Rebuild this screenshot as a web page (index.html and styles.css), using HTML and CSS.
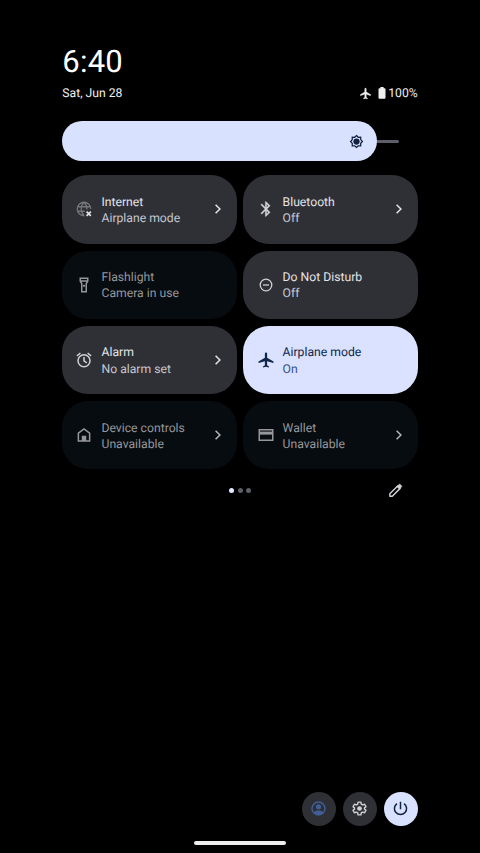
FILE: index.html
```html
<!DOCTYPE html>
<html lang="en">
<head>
<meta charset="utf-8">
<title>Quick settings</title>
<link rel="stylesheet" href="styles.css">
</head>
<body>
<main class="shade">
  <div class="clock">6:40</div>
  <div class="status">
    <span class="date">Sat, Jun 28</span>
    <span class="system">
      <svg class="plane-small" viewBox="0 0 24 24"><path d="M21.500 16v-2l-8-5V3.500C13.500 2.670 12.830 2 12 2s-1.500.67-1.500 1.500V9l-8 5v2l8-2.500V19l-2 1.500V22l3.500-1 3.500 1v-1.500L13.500 19v-5.500z" fill="currentColor" stroke="currentColor" stroke-width=".5"/></svg>
      <svg class="battery" viewBox="0 0 8 12"><path d="M2.400 0h3.200v1.200h.9q1 0 1 1v8.600q0 1-1 1h-5q-1 0-1-1V2.200q0-1 1-1h.9z" fill="currentColor"/></svg>
      <span class="percent">100%</span>
    </span>
  </div>

  <div class="brightness">
    <div class="level">
      <svg class="sun" viewBox="0 0 24 24"><path d="M12 2.500l2.800 2.700 3.900-.1v3.900l2.800 3-2.800 2.900v3.900h-3.900L12 21.500l-2.900-2.700H5.200v-3.900L2.500 12l2.700-3V5.100l3.900.1z" fill="none" stroke="currentColor" stroke-width="2"/><circle cx="12" cy="12" r="5" fill="currentColor"/></svg>
    </div>
    <div class="track"></div>
  </div>

  <div class="tiles">
    <div class="tile">
      <svg class="icon" viewBox="0 0 24 24"><g fill="none" stroke="#74757a" stroke-width="1.700"><path d="M12.500 21H12a9 9 0 1 1 9-9M12 21c-5-5-5-13 0-18M12 3c3 3 4 6 3.800 9.500M3.500 9h17M3.500 15H13"/></g><path d="M15.500 15.500l5.600 5.600M21.100 15.500l-5.600 5.600" stroke="#e3e3e8" stroke-width="2.200"/></svg>
      <div class="label"><div class="name">Internet</div><div class="state">Airplane mode</div></div>
      <svg class="chevron" viewBox="0 0 8 12"><path d="M1.600 1.700L5.900 6l-4.300 4.300"/></svg>
    </div>
    <div class="tile">
      <svg class="icon" viewBox="0 0 24 24"><path d="M17.710 7.710L12 2h-1v7.590L6.410 5 5 6.410 10.590 12 5 17.590 6.410 19 11 14.410V22h1l5.710-5.710-4.300-4.290 4.300-4.290zM13 5.830l1.880 1.880L13 9.590V5.830zm1.880 10.460L13 18.170v-3.760l1.880 1.880z" fill="currentColor" stroke="currentColor" stroke-width=".3"/></svg>
      <div class="label"><div class="name">Bluetooth</div><div class="state">Off</div></div>
      <svg class="chevron" viewBox="0 0 8 12"><path d="M1.600 1.700L5.900 6l-4.300 4.300"/></svg>
    </div>
    <div class="tile unavailable">
      <svg class="icon" viewBox="0 0 24 24"><path d="M7 3h10v4l-2 3v11H9V10L7 7zM7 6.500h10" fill="none" stroke="currentColor" stroke-width="2"/><circle cx="12" cy="13" r="1.500" fill="currentColor"/></svg>
      <div class="label"><div class="name">Flashlight</div><div class="state">Camera in use</div></div>
    </div>
    <div class="tile">
      <svg class="icon" viewBox="0 0 24 24"><g fill="none" stroke="currentColor" stroke-width="1.700"><circle cx="12" cy="12" r="7.700"/><path d="M8 12h8"/></g></svg>
      <div class="label"><div class="name">Do Not Disturb</div><div class="state">Off</div></div>
    </div>
    <div class="tile">
      <svg class="icon" viewBox="0 0 24 24"><g fill="none" stroke="currentColor" stroke-width="2"><circle cx="12" cy="13" r="8"/><path d="M12 8v5.200l3.700 2.700M2.600 6.500l4.600-3.800M21.400 6.500l-4.600-3.800"/></g></svg>
      <div class="label"><div class="name">Alarm</div><div class="state">No alarm set</div></div>
      <svg class="chevron" viewBox="0 0 8 12"><path d="M1.600 1.700L5.900 6l-4.300 4.300"/></svg>
    </div>
    <div class="tile active">
      <svg class="icon" viewBox="0 0 24 24"><path d="M22 16v-2l-8.500-5V3.500C13.500 2.670 12.830 2 12 2s-1.500.67-1.500 1.500V9L2 14v2l8.500-2.500V19L8 20.500V22l4-1 4 1v-1.500L13.500 19v-5.500z" fill="currentColor"/></svg>
      <div class="label"><div class="name">Airplane mode</div><div class="state">On</div></div>
    </div>
    <div class="tile unavailable">
      <svg class="icon" viewBox="0 0 24 24"><path d="M4.500 20V9.500L12 4l7.500 5.500V20z" fill="none" stroke="currentColor" stroke-width="2"/><path d="M9 13h6v7H9z" fill="currentColor"/></svg>
      <div class="label"><div class="name">Device controls</div><div class="state">Unavailable</div></div>
      <svg class="chevron" viewBox="0 0 8 12"><path d="M1.600 1.700L5.900 6l-4.300 4.300"/></svg>
    </div>
    <div class="tile unavailable">
      <svg class="icon" viewBox="0 0 24 24"><path d="M3 5h18v14H3z" fill="none" stroke="currentColor" stroke-width="2"/><path d="M3 7.500h18v4H3z" fill="currentColor"/></svg>
      <div class="label"><div class="name">Wallet</div><div class="state">Unavailable</div></div>
      <svg class="chevron" viewBox="0 0 8 12"><path d="M1.600 1.700L5.900 6l-4.300 4.300"/></svg>
    </div>
  </div>

  <div class="pager">
    <div class="dots"><i class="dot current"></i><i class="dot"></i><i class="dot"></i></div>
    <svg class="edit" viewBox="0 0 24 24"><path d="M4 20v-3.500L15 5.500l3.500 3.500L7.500 20z" fill="none" stroke="currentColor" stroke-width="2" stroke-linejoin="round"/><path d="M14 6.500l2.800-2.800q1-1 2 0l1.500 1.500q1 1 0 2L17.500 10z" fill="currentColor" stroke="currentColor"/></svg>
  </div>

  <div class="actions">
    <div class="round user"><svg viewBox="0 0 24 24"><circle cx="12" cy="12" r="9.200" fill="none" stroke="currentColor" stroke-width="2"/><circle cx="12" cy="9.500" r="3.600" fill="currentColor"/><path d="M5 17.500c3.500-3.500 10.500-3.500 14 0-3 4.500-11 4.500-14 0z" fill="currentColor"/></svg></div>
    <div class="round"><svg viewBox="0 0 24 24"><path d="M10 3h4l.5 2.800 2 1.200 2.700-1 2 3.500L19 11.200v1.600l2.200 1.700-2 3.500-2.700-1-2 1.200L14 21h-4l-.5-2.800-2-1.200-2.700 1-2-3.500L5 12.800v-1.600L2.800 9.500l2-3.500 2.700 1 2-1.200z" fill="none" stroke="currentColor" stroke-width="2" stroke-linejoin="round"/><circle cx="12" cy="12" r="3.300" fill="currentColor"/></svg></div>
    <div class="round power"><svg viewBox="0 0 24 24"><path d="M12 2.500v10.500M7 5a8.600 8.600 0 1 0 10 0" fill="none" stroke="currentColor" stroke-width="2.100"/></svg></div>
  </div>
  <div class="home-bar"></div>
</main>
</body>
</html>
```

FILE: styles.css
```css
* { box-sizing: border-box; }

body {
  margin: 0;
  background: #000;
  color: #e3e3e8;
  font-family: Roboto, "Liberation Sans", sans-serif;
  text-rendering: geometricPrecision;
}

svg { display: block; flex: none; }

.shade {
  display: flex;
  flex-direction: column;
  width: 480px;
  height: 853px;
  padding: 43px 62.300px 8.500px;
  overflow: hidden;
}

.clock {
  height: 38px;
  font-size: 31px;
  line-height: 38px;
  letter-spacing: .2px;
  color: #fff;
}

.status {
  display: flex;
  align-items: center;
  justify-content: space-between;
  height: 24px;
  font-size: 12.200px;
  color: #f0f0f2;
}

.system { display: flex; align-items: center; }
.plane-small { width: 13px; height: 13px; margin-right: 5.500px; }
.battery { width: 8px; height: 12px; margin-right: 2.500px; }

.brightness {
  display: flex;
  align-items: center;
  height: 40.500px;
  margin-top: 15.800px;
}

.level {
  display: flex;
  align-items: center;
  justify-content: flex-end;
  width: 315px;
  height: 100%;
  padding-right: 13px;
  border-radius: 21px;
  background: #d8e2ff;
  color: #11213f;
}

.sun { width: 15px; height: 15px; }

.track {
  width: 22px;
  height: 3px;
  border-radius: 0 2px 2px 0;
  background: #5c5e69;
}

.tiles {
  display: grid;
  grid-template-columns: 1fr 1fr;
  grid-auto-rows: 68.300px;
  gap: 7px 6.800px;
  margin-top: 14px;
}

.tile {
  display: flex;
  align-items: center;
  padding: 0 15px 0 13.200px;
  border-radius: 26px;
  background: #2f3036;
}

.icon { width: 18px; height: 18px; color: #d0d0d5; }

.label {
  flex: 1;
  margin-left: 8px;
  padding-top: 1.200px;
  font-size: 12.200px;
  line-height: 16.400px;
}

.state { color: #c5c6d0; }

.chevron {
  width: 8px;
  height: 12px;
  fill: none;
  stroke: #e3e3e8;
  stroke-width: 1.500;
}

.unavailable { background: #070c10; }
.unavailable .icon,
.unavailable .name,
.unavailable .state { color: #96979c; }
.unavailable .chevron { stroke: #b4b5ba; }

.active { background: #dae2ff; }
.active .icon, .active .name { color: #11264c; }
.active .state { color: #38518a; }

.pager {
  display: grid;
  grid-template-columns: 1fr auto 1fr;
  align-items: center;
  height: 41.500px;
}

.dots { display: flex; grid-column: 2; gap: 3.500px; }
.dot { width: 5px; height: 5px; border-radius: 50%; background: #5c5e69; }
.current { background: #e4eaff; }

.edit {
  justify-self: end;
  width: 17px;
  height: 17px;
  margin-right: 14px;
  color: #d0d0d5;
}

.actions {
  display: flex;
  justify-content: flex-end;
  gap: 6.800px;
  margin-top: auto;
}

.round {
  display: flex;
  align-items: center;
  justify-content: center;
  width: 34.200px;
  height: 34.200px;
  border-radius: 50%;
  background: #2f3036;
  color: #d0d0d5;
}

.round svg { width: 17px; height: 17px; }
.user { color: #405f96; }
.power { background: #d8e2ff; color: #11213f; }

.home-bar {
  align-self: center;
  width: 92px;
  height: 3.500px;
  margin-top: 15px;
  border-radius: 2px;
  background: #eee;
}
```
